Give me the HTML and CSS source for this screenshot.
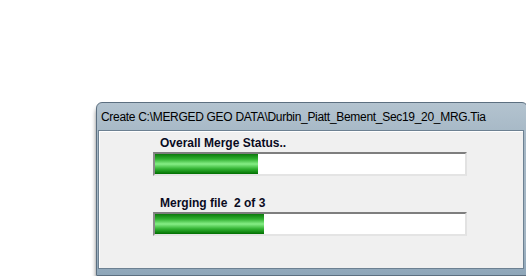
FILE: index.html
```html
<!DOCTYPE html>
<html lang="en">
<head>
    <meta charset="UTF-8">
    <link rel="stylesheet" href="styles.css">
</head>
<body>
    <div class="window">
        <div class="title-bar">Create C:\MERGED GEO DATA\Durbin_Piatt_Bement_Sec19_20_MRG.Tia</div>
        <div class="client">
            <div class="label">Overall Merge Status..</div>
            <div class="progress"><div class="fill" style="width: 103px;"></div></div>
            <div class="label">Merging file&nbsp; 2 of 3</div>
            <div class="progress"><div class="fill" style="width: 109px;"></div></div>
        </div>
    </div>
</body>
</html>
```

FILE: styles.css
```css
body {
    margin: 0;
    padding: 102px 0 0 96px;
    background-color: #fff;
    font-family: "Liberation Sans", Arial, sans-serif;
}
.window {
    width: 426px;
    height: 166px;
    padding: 0 3px 6px 1px;
    box-sizing: content-box;
    border: 1px solid #5c6f80;
    border-radius: 6px 6px 0 0;
    background: linear-gradient(#b3c3cf, #a5b7c5 20%, #a3b5c3 80%, #8ea6b9);
    box-shadow: 0 5px 4px rgba(0, 0, 0, 0.5);
    display: flex;
    flex-direction: column;
}
.title-bar {
    height: 27px;
    line-height: 28px;
    padding-left: 3px;
    font-size: 12px;
    letter-spacing: -0.3px;
    color: #000;
    white-space: nowrap;
}
.client {
    flex: 1;
    background-color: #f0f0f0;
    border: 1px solid #6d8192;
    box-shadow: inset 1px 1px 0 #fff;
    padding: 4px 0 0 54px;
}
.label {
    margin-left: 7px;
    height: 17px;
    line-height: 17px;
    font-size: 12px;
    font-weight: bold;
    color: #0a0a1e;
}
.progress {
    width: 310px;
    height: 20px;
    border-top: 2px solid #7e7e7e;
    border-left: 2px solid #8a8a8a;
    border-right: 2px solid #e2e2e2;
    border-bottom: 2px solid #e4e4e4;
    background-color: #fff;
    margin-bottom: 19px;
}
.fill {
    height: 100%;
    background: linear-gradient(#0d7a0d, #30b030 25%, #86ee86 50%, #30b030 75%, #006f00);
}
```
